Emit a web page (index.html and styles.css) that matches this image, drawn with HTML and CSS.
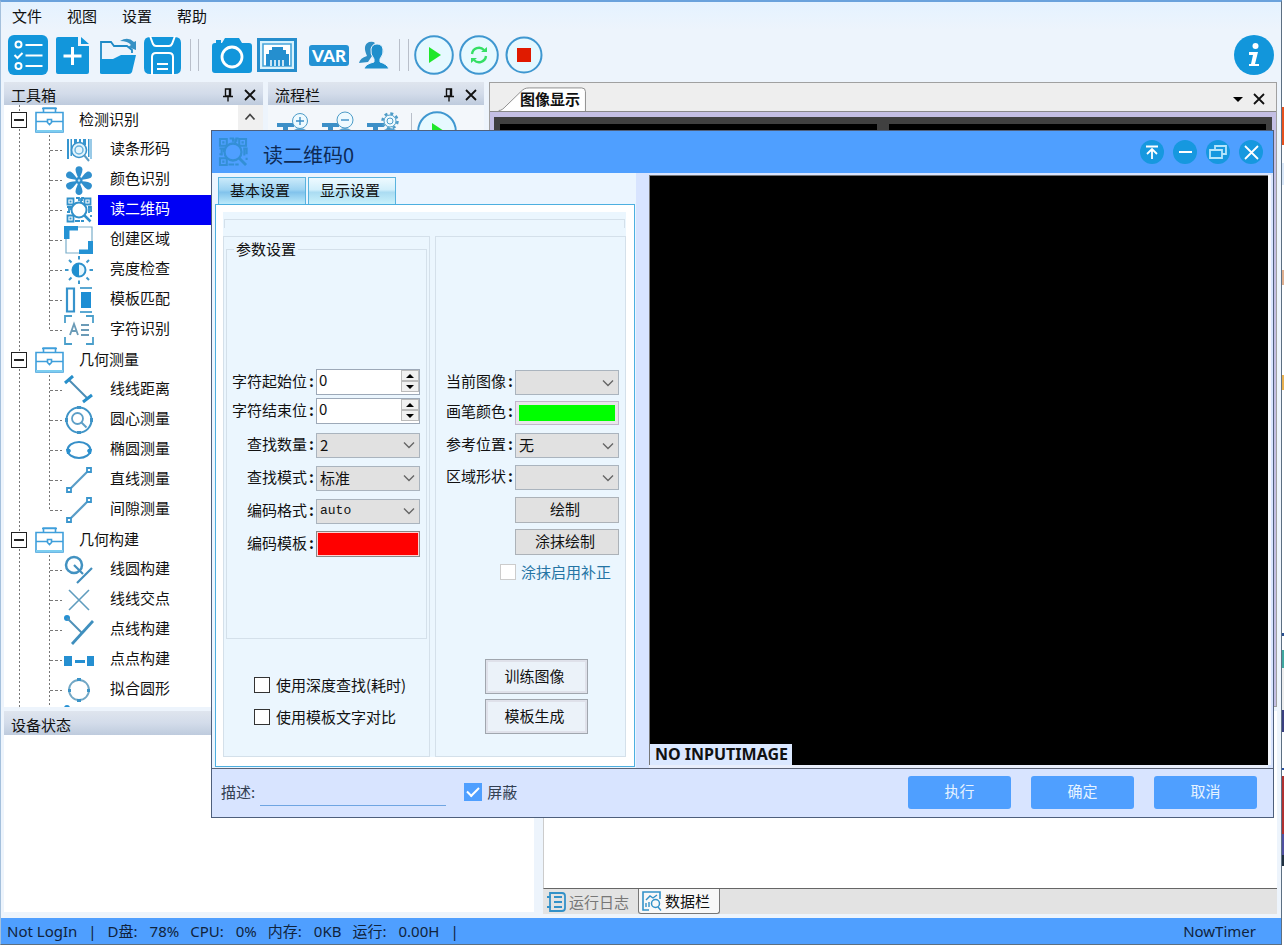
FILE: index.html
```html
<!DOCTYPE html>
<html lang="zh-CN">
<head>
<meta charset="utf-8">
<title>读二维码0</title>
<link rel="stylesheet" href="styles.css">
</head>
<body>
<svg class="sprite" aria-hidden="true">
  <symbol id="case" viewBox="0 0 30 30"><g fill="none" stroke="#3f9fdb" stroke-width="1.6"><path d="M1 7.500h27v19.500h-27zM1 16.500h11M17 16.500h11M8.500 7v-4h12v4M7 3.500h15" /><path d="M12.500 14.500h4v3l-2 2l-2-2z"/></g><path d="M1 25h27v2h-27z" fill="#7ccdf0"/></symbol>
  <symbol id="barcode" viewBox="0 0 30 30"><path d="M3 4h2v20h-2zM6.500 4h1.500v17h-1.500zM10 4h3v5h-3zM15 4h2v4h-2zM19 4h3v6h-3zM24 4h1.500v18h-1.500zM26.500 4h1v20h-1z" fill="#3595cf"/><circle cx="15" cy="15" r="7.500" fill="#e4f5fd" stroke="#3b94cb" stroke-width="1.600"/><circle cx="15" cy="15" r="4" fill="none" stroke="#69b3dd" stroke-width="1.500"/><path d="M20 20l5 6" stroke="#5b9cc4" stroke-width="2"/></symbol>
  <symbol id="flower" viewBox="0 0 30 30"><g fill="#2f8fcd"><path id="petal" d="M15 15.500c-1-4-3.500-8-3.500-11c0-4.500 7-4.500 7 0c0 3-2.500 7-3.500 11z"/><use href="#petal" transform="rotate(60 15 15.500)"/><use href="#petal" transform="rotate(120 15 15.500)"/><use href="#petal" transform="rotate(180 15 15.500)"/><use href="#petal" transform="rotate(240 15 15.500)"/><use href="#petal" transform="rotate(300 15 15.500)"/><circle cx="15" cy="15.500" r="3.500"/></g><circle cx="15" cy="15.500" r="1.200" fill="#bfe3f6"/></symbol>
  <symbol id="qr" viewBox="0 0 30 30"><g fill="none" stroke="currentColor" stroke-width="1.800"><path d="M3.500 3.500h6v6h-6zM20.500 3.500h6v6h-6zM3.500 20.500h6v6h-6z"/><path d="M12 3h3v3M17 3v4M3 12h4v3M24 12h3v5M11 26h5M3 17h3M17 26h3M27 20v2M20 3h-2v3M5 12v6M25 12v6"/><circle cx="15" cy="15" r="7.500" stroke-width="2"/><path d="M20.500 20.500l6 6" stroke-width="2.500"/></g><path d="M5.500 5.500h2v2h-2zM22.500 5.500h2v2h-2zM5.500 22.500h2v2h-2z" fill="currentColor"/></symbol>
  <symbol id="region" viewBox="0 0 30 30"><path d="M2 2h26v26h-26z" fill="none" stroke="#7aaeca" stroke-width="1.200"/><path d="M0 1h14v4.500h-8.500v8.500h-5.500zM29 29h-14v-4.500h9v-8.500h5z" fill="#2492d4"/></symbol>
  <symbol id="sun" viewBox="0 0 30 30"><circle cx="15" cy="15" r="6.500" fill="#e6f7fd" stroke="#2d91cc" stroke-width="2"/><path d="M15 8.500a6.500 6.500 0 0 0 0 13z" fill="#1f8fd0"/><path d="M15 1v3.500M15 25.500v3.500M1 15h3.500M25.500 15h3.500M5 5l2.500 2.500M22.500 22.500l2.500 2.500M5 25l2.500-2.500M22.500 7.500l2.500-2.500" stroke="#3c98cc" stroke-width="2"/></symbol>
  <symbol id="match" viewBox="0 0 30 30"><path d="M3 3.500h7v23h-7z" fill="none" stroke="#3693cc" stroke-width="2.200"/><path d="M16 3h12M16 27h12" stroke="#5ba8d2" stroke-width="2"/><path d="M17 7h10v16h-10z" fill="#1d8ed4"/></symbol>
  <symbol id="ocr" viewBox="0 0 30 30"><path d="M1 8v-7h7M22 1h7v7M29 22v7h-7M8 29h-7v-7" fill="none" stroke="#4b9fcb" stroke-width="1.800"/><path d="M6 20l4-11l4 11M7.500 16h5M17 10h8M17 15h8M17 20h8" fill="none" stroke="#6b9bb7" stroke-width="1.800"/></symbol>
  <symbol id="distance" viewBox="0 0 30 30"><path d="M5 5l18 18" stroke="#4b8db5" stroke-width="2"/><path d="M1 8l8-7M19 27l9-7" stroke="#288fca" stroke-width="3"/></symbol>
  <symbol id="center" viewBox="0 0 30 30"><circle cx="15" cy="15" r="12.500" fill="none" stroke="#3f94c7" stroke-width="2"/><circle cx="13.500" cy="13.500" r="5.500" fill="none" stroke="#5d9fc7" stroke-width="1.800"/><path d="M17.500 17.500l5 5" stroke="#5d9fc7" stroke-width="2"/><path d="M13 1h4v3h-4zM13 26h4v3h-4zM1 13h3v4h-3zM26 13h3v4h-3z" fill="#3f94c7"/></symbol>
  <symbol id="ellipse" viewBox="0 0 30 30"><ellipse cx="15" cy="15" rx="11.500" ry="8" fill="none" stroke="#368fc8" stroke-width="2"/><path d="M2 14h4l1 2l-2 3h-2zM24 14h4l-1 5h-2l-2-3z" fill="#2990cf"/></symbol>
  <symbol id="line" viewBox="0 0 30 30"><path d="M7 23l16-16" stroke="#5a9dc7" stroke-width="2.200"/><path d="M3 23h4v4h-4zM23 3h4v4h-4z" fill="#fff" stroke="#3a95cd" stroke-width="1.800"/></symbol>
  <symbol id="circleline" viewBox="0 0 30 30"><circle cx="10" cy="10" r="8" fill="none" stroke="#4392c1" stroke-width="2.500"/><path d="M10 10l9 9M13 28l15-15" fill="none" stroke="#438fbd" stroke-width="2.200"/></symbol>
  <symbol id="cross" viewBox="0 0 30 30"><path d="M5 5l20 20M25 5l-20 20" stroke="#5f9cbe" stroke-width="1.600"/></symbol>
  <symbol id="pointline" viewBox="0 0 30 30"><circle cx="3" cy="3" r="3" fill="#2590d3"/><path d="M3 3l15 15" stroke="#4e91b8" stroke-width="2"/><path d="M8 29l21-23" stroke="#3f8fbe" stroke-width="2.800"/></symbol>
  <symbol id="points" viewBox="0 0 30 30"><path d="M0 11h8v10h-8zM23 11h7v10h-7zM11 15h10v3h-10z" fill="#258fd1"/></symbol>
  <symbol id="fit" viewBox="0 0 30 30"><circle cx="15" cy="15" r="10" fill="none" stroke="#72a7c5" stroke-width="1.800"/><path d="M13 3h4v3h-4zM13 24h4v3h-4zM4 14h3v3h-3zM23 14h3v3h-3z" fill="#3b94c8"/></symbol>
  <symbol id="pin" viewBox="0 0 14 14"><path d="M4.500 1h5v7h-5zM8.500 1v7M2 8.500h10M7 9v4.500" fill="none" stroke="currentColor" stroke-width="1.400"/></symbol>
  <symbol id="close" viewBox="0 0 14 14"><path d="M2 2l10 10M12 2l-10 10" stroke="currentColor" stroke-width="1.800"/></symbol>
  <symbol id="chevron" viewBox="0 0 12 12"><path d="M1 3.500l5 5l5-5" fill="none" stroke="currentColor" stroke-width="1.400"/></symbol>
  <symbol id="run" viewBox="0 0 40 40"><circle cx="20" cy="20" r="18.800" fill="#e6f9ff" stroke="#3f97d0" stroke-width="2"/><path d="M15 12l12 8l-12 8z" fill="#1fe72b"/></symbol>
  <symbol id="tool" viewBox="0 0 36 40"><path d="M1 18h17v4h-6v10h-5v-10h-6z" fill="#3c8fc7"/><path d="M18 25q6-4 12 0v6h-12z" fill="#5aa5d2"/></symbol>
</svg>

<div class="desktop">
<main class="app">
  <nav class="menu">
    <button>文件</button><button>视图</button><button>设置</button><button>帮助</button>
  </nav>
  <div class="toolbar">
    <button class="tool" aria-label="任务列表"><svg viewBox="0 0 40 40"><rect width="40" height="40" rx="6" fill="#1296db"/><g fill="none" stroke="#fff" stroke-width="2"><circle cx="10.500" cy="9.500" r="3"/><circle cx="10.500" cy="31" r="3"/><path d="M17.500 10h17M17.500 20.500h17M17.500 31h17M6.500 20l3 3l5-5"/></g></svg></button>
    <button class="tool" aria-label="新建"><svg viewBox="0 0 40 40"><path d="M3 4q0-2 2-2h20v9h11v26q0 2-2 2h-29q-2 0-2-2zM28 2l8 7h-8z" fill="#1296db"/><path d="M19.500 12v18M10.500 21h18" stroke="#fff" stroke-width="3"/></svg></button>
    <button class="tool" aria-label="打开"><svg viewBox="0 0 40 40"><path d="M3 36v-29h10l3 4h13l5 4v3" fill="none" stroke="#1f8ac6" stroke-width="1.800"/><path d="M2 38v-14h13l8-4h15l-4 17q-1 2-3 2h-27q-2 0-2-1z" fill="#1296db"/><path d="M22 6q8-5 14 1l2-1v9l-8-3l3-2q-3-4-11-4z" fill="#3590c4"/></svg></button>
    <button class="tool" aria-label="保存"><svg viewBox="0 0 40 40"><path d="M7 2h25q6 0 6 6v25q0 6-6 6h-25q-6 0-6-6v-25q0-6 6-6z" fill="#1296db"/><g fill="none" stroke="#fff" stroke-width="2"><path d="M7 1l3 8q1 2 3 2h13q2 0 3-2l3-8M9 40v-18q0-4 4-4h13q4 0 4 4v18M14 29h11M14 34h11"/></g></svg></button>
    <span class="separator wide"></span>
    <button class="tool" aria-label="相机"><svg viewBox="0 0 40 40"><path d="M3 8h7l3-5h14l3 5h7q3 0 3 3v24q0 3-3 3h-34q-3 0-3-3v-24q0-3 3-3z" fill="#1296db"/><circle cx="20" cy="22" r="10" fill="none" stroke="#fff" stroke-width="2.800"/><path d="M4 5h5v3h-5z" fill="#1296db"/></svg></button>
    <button class="tool" aria-label="采集卡"><svg viewBox="0 0 40 40"><path d="M1.500 4.500h37v31h-37z" fill="#d8f2fd" stroke="#268dcc" stroke-width="3"/><path d="M6 9h28v22h-28z" fill="#fff" stroke="#47a5da" stroke-width="1.600"/><path d="M9 31v-12h3v-4h3v-3h11v3h3v4h3v12z" fill="#258fcf"/><path d="M14 31v-6M18 31v-6M22 31v-6M26 31v-6" stroke="#fff" stroke-width="1.500"/></svg></button>
    <button class="tool var"><span>VAR</span></button>
    <button class="tool" aria-label="用户"><svg viewBox="0 0 40 40"><path d="M5 28q1-5 8-7q-5-11 2-14q4-1 6 1q-6 5-3 13l-4 6z" fill="#2f8fc5"/><path d="M10 34q1-5 10-7v-3q-4-5-3-10q1-5 6-5t6 5q1 5-3 10v3q7 2 9 7z" fill="#1f8fcc" stroke="#edf4fc" stroke-width="1"/></svg></button>
    <span class="separator"></span>
    <button class="tool" aria-label="运行"><svg><use href="#run"/></svg></button>
    <button class="tool" aria-label="循环运行"><svg viewBox="0 0 40 40"><circle cx="20" cy="20" r="18.800" fill="#e6f9ff" stroke="#3f97d0" stroke-width="2"/><path d="M13 19a7 7 0 0 1 12-4M27 21a7 7 0 0 1-12 4" fill="none" stroke="#35df65" stroke-width="2.400"/><path d="M22 17h6v-5zM18 23h-6v5z" fill="#35df65"/></svg></button>
    <button class="tool" aria-label="停止"><svg viewBox="0 0 40 40"><circle cx="20" cy="20" r="17.500" fill="#e6f9ff" stroke="#3f97d0" stroke-width="2"/><path d="M13 13h14v14h-14z" fill="#e01b00"/></svg></button>
    <button class="tool info" aria-label="关于"><svg viewBox="0 0 40 40"><circle cx="20" cy="20" r="20" fill="#1296db"/><circle cx="21.500" cy="11" r="3" fill="#fff"/><path d="M15 17h9l-3 12h4v2h-10v-2h2l2-9h-4z" fill="#fff"/></svg></button>
  </div>

  <div class="workspace">
    <section class="panel toolbox">
      <header class="panel-head"><h2>工具箱</h2><svg><use href="#pin"/></svg><svg><use href="#close"/></svg></header>
      <div class="toolbox-body">
        <ul class="tree">
          <li>
            <div class="root"><span class="toggle"></span><svg><use href="#case"/></svg><span>检测识别</span></div>
            <ul class="branch">
              <li><svg><use href="#barcode"/></svg><span>读条形码</span></li>
              <li><svg><use href="#flower"/></svg><span>颜色识别</span></li>
              <li class="selected"><svg><use href="#qr"/></svg><span>读二维码</span></li>
              <li><svg><use href="#region"/></svg><span>创建区域</span></li>
              <li><svg><use href="#sun"/></svg><span>亮度检查</span></li>
              <li><svg><use href="#match"/></svg><span>模板匹配</span></li>
              <li><svg><use href="#ocr"/></svg><span>字符识别</span></li>
            </ul>
          </li>
          <li>
            <div class="root"><span class="toggle"></span><svg><use href="#case"/></svg><span>几何测量</span></div>
            <ul class="branch">
              <li><svg><use href="#distance"/></svg><span>线线距离</span></li>
              <li><svg><use href="#center"/></svg><span>圆心测量</span></li>
              <li><svg><use href="#ellipse"/></svg><span>椭圆测量</span></li>
              <li><svg><use href="#line"/></svg><span>直线测量</span></li>
              <li><svg><use href="#line"/></svg><span>间隙测量</span></li>
            </ul>
          </li>
          <li>
            <div class="root"><span class="toggle"></span><svg><use href="#case"/></svg><span>几何构建</span></div>
            <ul class="branch">
              <li><svg><use href="#circleline"/></svg><span>线圆构建</span></li>
              <li><svg><use href="#cross"/></svg><span>线线交点</span></li>
              <li><svg><use href="#pointline"/></svg><span>点线构建</span></li>
              <li><svg><use href="#points"/></svg><span>点点构建</span></li>
              <li><svg><use href="#fit"/></svg><span>拟合圆形</span></li>
              <li><svg><use href="#pointline"/></svg></li>
            </ul>
          </li>
        </ul>
        <div class="scrollbar"><svg viewBox="0 0 12 12"><path d="M1.500 8.500l4.500-5l4.500 5" fill="none" stroke="#444" stroke-width="1.800"/></svg></div>
      </div>
    </section>

    <section class="panel flow">
      <header class="panel-head"><h2>流程栏</h2><svg><use href="#pin"/></svg><svg><use href="#close"/></svg></header>
      <div class="flow-tools">
        <svg viewBox="0 0 36 40"><use href="#tool"/><circle cx="24" cy="16" r="7.500" fill="#eefaff" stroke="#4d9cc8"/><path d="M24 12v8M20 16h8" stroke="#3c8fc7" stroke-width="1.400"/></svg>
        <svg viewBox="0 0 36 40"><use href="#tool"/><circle cx="24" cy="15" r="8" fill="#eefaff" stroke="#4d9cc8"/><path d="M20 15h8" stroke="#3c8fc7" stroke-width="1.400"/></svg>
        <svg viewBox="0 0 36 40"><use href="#tool"/><circle cx="24" cy="16" r="7.500" fill="none" stroke="#4d9cc8" stroke-width="2.500" stroke-dasharray="3 2.900"/><circle cx="24" cy="16" r="6" fill="#eefaff" stroke="#4d9cc8"/><circle cx="24" cy="16" r="3" fill="none" stroke="#4d9cc8"/></svg>
        <span class="flow-line"></span>
        <svg class="flow-run"><use href="#run"/></svg>
      </div>
    </section>

    <section class="document">
      <header class="doc-head">
        <div class="doc-tab"><svg viewBox="0 0 96 26"><path d="M0 26c3 0 5-2 8-5l16-16c3-3 5-4 9-4h57q4 0 4 4v21z" fill="#fff"/><path d="M0 25.500c3 0 5-2 8-5l16-15.500c3-3 5-4 9-4h57q4 0 4 4v21" fill="none" stroke="#888"/></svg><span>图像显示</span></div>
        <svg class="doc-arrow" viewBox="0 0 14 14"><path d="M2 5h10l-5 5z"/></svg>
        <svg class="doc-close"><use href="#close"/></svg>
      </header>
      <div class="views"><div class="view"></div><div class="view"></div></div>
    </section>
  </div>

  <div class="lower">
    <section class="panel devices">
      <header class="panel-head"><h2>设备状态</h2></header>
      <div class="device-list"></div>
    </section>
    <section class="data">
      <div class="data-body"></div>
      <div class="data-tabs">
        <button class="data-tab"><svg viewBox="0 0 20 20"><path d="M4 1h12q3 0 3 3v12q0 3-3 3h-12zM8 5h8M8 10h8M8 15h8M1 5h4M4 1v18M1 15h4" fill="none" stroke="#3391c8" stroke-width="1.800"/></svg>运行日志</button>
        <button class="data-tab active"><svg viewBox="0 0 20 20"><path d="M18 8v-7h-17v18h6" fill="none" stroke="#3391c8" stroke-width="1.600"/><circle cx="13.500" cy="12.500" r="4" fill="none" stroke="#3391c8" stroke-width="1.500"/><path d="M16 16l3 3.500M4 9l4-4l3 2l4-3M4 12v4M7 11v5" fill="none" stroke="#3391c8" stroke-width="1.400"/></svg>数据栏</button>
      </div>
    </section>
  </div>

  <footer class="status">
    <span>Not LogIn</span><span>|</span>
    <span class="stat"><span>D盘:</span><span>78%</span></span>
    <span class="stat"><span>CPU:</span><span>0%</span></span>
    <span class="stat"><span>内存:</span><span>0KB</span></span>
    <span class="stat"><span>运行:</span><span>0.00H</span></span>
    <span>|</span>
    <span class="timer">NowTimer</span>
  </footer>

  <section class="dialog" role="dialog" aria-labelledby="dialog-title">
    <header class="title">
      <svg class="title-icon"><use href="#qr"/></svg>
      <h1 id="dialog-title">读二维码0</h1>
      <button aria-label="置顶"><svg viewBox="0 0 24 24"><path d="M6 6.500h12M12 19v-10M7 14l5-5l5 5"/></svg></button>
      <button aria-label="最小化"><svg viewBox="0 0 24 24"><path d="M6 12h13"/></svg></button>
      <button aria-label="还原"><svg viewBox="0 0 24 24"><path d="M4 10h12v8h-12zM9 10v-4h11v8h-4" stroke="#b5e5fb"/></svg></button>
      <button aria-label="关闭"><svg viewBox="0 0 24 24"><path d="M6 6l13 13M19 6l-13 13"/></svg></button>
    </header>

    <div class="dialog-body">
      <div class="settings">
        <div class="tabs" role="tablist">
          <button class="tab current" role="tab" aria-selected="true">基本设置</button>
          <button class="tab" role="tab" aria-selected="false">显示设置</button>
        </div>
        <div class="page" role="tabpanel">
          <div class="page-inner">
            <div class="strip"></div>
            <div class="columns">
              <div class="box left">
                <fieldset class="params">
                  <legend>参数设置</legend>
                  <div class="rows spins">
                    <label for="start">字符起始位</label>
                    <div class="spin"><input id="start" type="number" value="0"><div><button aria-label="增加"><svg viewBox="0 0 8 4"><path d="M0 4l4-4l4 4z"/></svg></button><button aria-label="减少"><svg viewBox="0 0 8 4"><path d="M0 0l4 4l4-4z"/></svg></button></div></div>
                    <label for="end">字符结束位</label>
                    <div class="spin"><input id="end" type="number" value="0"><div><button aria-label="增加"><svg viewBox="0 0 8 4"><path d="M0 4l4-4l4 4z"/></svg></button><button aria-label="减少"><svg viewBox="0 0 8 4"><path d="M0 0l4 4l4-4z"/></svg></button></div></div>
                  </div>
                  <div class="rows">
                    <label for="count">查找数量</label>
                    <div class="pick"><select id="count"><option>2</option></select><svg><use href="#chevron"/></svg></div>
                    <label for="mode">查找模式</label>
                    <div class="pick"><select id="mode"><option>标准</option></select><svg><use href="#chevron"/></svg></div>
                    <label for="format">编码格式</label>
                    <div class="pick mono"><select id="format"><option>auto</option></select><svg><use href="#chevron"/></svg></div>
                    <label for="template">编码模板</label>
                    <button id="template" class="swatch red"></button>
                  </div>
                </fieldset>
                <div class="checks">
                  <label><input type="checkbox">使用深度查找(耗时)</label>
                  <label><input type="checkbox">使用模板文字对比</label>
                </div>
              </div>
              <div class="box right">
                <div class="rows image-rows">
                  <label for="image">当前图像</label>
                  <div class="pick"><select id="image"><option></option></select><svg><use href="#chevron"/></svg></div>
                  <label for="pen">画笔颜色</label>
                  <button id="pen" class="swatch green"></button>
                </div>
                <div class="rows">
                  <label for="position">参考位置</label>
                  <div class="pick"><select id="position"><option>无</option></select><svg><use href="#chevron"/></svg></div>
                  <label for="shape">区域形状</label>
                  <div class="pick"><select id="shape"><option></option></select><svg><use href="#chevron"/></svg></div>
                  <button class="flat">绘制</button>
                  <button class="flat">涂抹绘制</button>
                  <label class="smear"><input type="checkbox">涂抹启用补正</label>
                </div>
                <div class="train">
                  <button>训练图像</button>
                  <button>模板生成</button>
                </div>
              </div>
            </div>
          </div>
        </div>
      </div>
      <div class="preview"><span>NO INPUTIMAGE</span></div>
    </div>

    <footer class="actions">
      <label for="note">描述:</label>
      <input id="note" class="note" type="text">
      <label class="mask"><input type="checkbox" checked>屏蔽</label>
      <div class="action-buttons"><button>执行</button><button>确定</button><button>取消</button></div>
    </footer>
  </section>
</main>
<div class="behind"></div>
</div>
</body>
</html>
```
FILE: styles.css
```css
* { box-sizing: border-box; }

body {
  margin: 0;
  background: #fff;
  color: #111;
  font: 15px/20px "Noto Sans", "Noto Sans CJK SC", sans-serif;
}

button, input, select { font: inherit; color: inherit; margin: 0; padding: 0; border-radius: 0; }
button { border: 0; background: none; }
h1, h2 { margin: 0; font-weight: normal; }
ul { list-style: none; margin: 0; padding: 0; }
svg { display: block; flex: none; }
.sprite { position: absolute; width: 0; height: 0; }

.desktop {
  display: grid;
  grid-template-columns: minmax(0, 1fr) 2px;
  grid-template-rows: minmax(0, 1fr);
  height: 100vh;
  padding-bottom: 3px;
  overflow: hidden;
}
.behind {
  background: linear-gradient(#fff 107px, #e8501c 107px 145px, #fff 145px 163px, #dbe8f8 163px 185px,
    #fff 185px 270px, #e0b090 270px 285px, #fff 285px 375px, #e8b050 375px 390px, #fff 390px 633px,
    #2a5090 633px 636px, #fff 636px 650px, #40a8a0 650px 668px, #eee 668px 710px, #3a4080 710px 732px,
    #fff 732px 768px, #2a50a0 768px 770px, #fff 770px 776px, #b03030 776px 834px, #5050a0 834px 855px,
    #203040 855px 866px, #fff 866px);
}

.app {
  position: relative;
  display: flex;
  flex-direction: column;
  min-width: 0;
  border: 1px solid #5c6f82;
  border-top: 2px solid #6aa2dc;
  border-left-color: #a4c0dc;
  background: #edf4fc;
}

.menu { display: flex; gap: 25px; padding: 3px 11px; background: linear-gradient(#e4f2ff, #edf4fc); }
.menu button { line-height: 22px; }

.toolbar { display: flex; align-items: center; gap: 5px; height: 52px; padding: 0 7px 2px; }
.tool { width: 40px; height: 40px; }
.tool svg { width: 40px; height: 40px; }
.tool.var { margin-left: 7px; }
.var span { display: block; border-radius: 3px; background: #2492d4; color: #fff; font: 900 17px/21px Lato, sans-serif; }
.info { margin-left: auto; }
.separator { width: 10px; height: 32px; border: solid #b9bfca; border-width: 0 1px; }
.separator.wide { width: 9px; margin: 0 8px 0 2px; }

.panel { display: flex; flex-direction: column; }
.panel-head {
  display: flex;
  align-items: center;
  gap: 8px;
  height: 23px;
  flex: none;
  padding: 2px 6px 0 7px;
  background: linear-gradient(#dfe5ee, #d3dcea 50%, #becbdd);
}
.panel-head h2 { margin-right: auto; font-size: 15px; line-height: 20px; }
.panel-head svg { width: 14px; height: 14px; }

.workspace { display: flex; flex: 1; gap: 5px; min-height: 0; padding: 0 4px 4px 3px; }
.toolbox { width: 259px; }
.toolbox-body { display: flex; flex: 1; min-height: 0; background: #fff; }
.tree {
  flex: 1;
  overflow: hidden;
  background: repeating-linear-gradient(#777 0 2px, #fff 2px 4px) 15px 0 / 1px 100% no-repeat;
}
.root { display: flex; align-items: center; height: 30px; padding-left: 7px; }
.root > span:last-child { padding-bottom: 2px; }
.toggle {
  width: 16px;
  height: 16px;
  border: 1px solid #222;
  background: linear-gradient(#222, #222) center / 10px 2px no-repeat #fff;
}
.root svg { width: 30px; height: 30px; margin: 0 14px 0 8px; }
.branch { background: repeating-linear-gradient(#777 0 2px, #fff 2px 4px) 45px 0 / 1px calc(100% - 15px) no-repeat; }
.branch li {
  display: flex;
  height: 30px;
  padding-left: 60px;
  background: repeating-linear-gradient(90deg, #777 0 3px, #fff 3px 5px) 46px 15px / 12px 1px no-repeat;
}
.branch svg { width: 30px; height: 30px; margin-right: 4px; color: #3191ca; }
.branch span { flex: 1; padding-left: 12px; line-height: 27px; }
.selected span { background: #0000f5; color: #fff; }
.scrollbar { width: 25px; padding: 6px; background: #f0f0f0; }
.scrollbar svg { width: 12px; height: 12px; }

.flow { width: 216px; background: #f3f7fb; }
.flow-tools { display: flex; gap: 9px; padding-left: 8px; }
.flow-tools svg { width: 36px; height: 40px; }
.flow-line { width: 1px; height: 40px; margin-top: 8px; background: #b9bfca; }
.flow-tools .flow-run { width: 40px; margin: 6px 0 0 -4px; }

.document { display: flex; flex: 1; flex-direction: column; min-width: 0; border: 1px solid #a0a0a0; background: #c4bfe4; }
.doc-head { display: flex; align-items: center; gap: 7px; height: 29px; flex: none; padding: 4px 10px 0 5px; border-bottom: 1px solid #888; background: #eee; }
.doc-tab { display: grid; align-self: flex-end; margin-right: auto; }
.doc-tab > * { grid-area: 1 / 1; }
.doc-tab svg { width: 96px; height: 24px; }
.doc-tab span { padding-left: 25px; font-weight: bold; line-height: 24px; }
.doc-arrow, .doc-close { width: 14px; height: 14px; }
.views { display: grid; flex: 1; grid-template-columns: 1fr 1fr; margin: 5px 4px 4px; background: #404040; }
.view { margin: 7px 6px; background: #000; }

.lower { display: flex; flex: none; gap: 9px; height: 207px; padding: 0 4px 4px 3px; }
.devices { width: 530px; padding-bottom: 2px; }
.lower .panel-head { height: 24px; padding-top: 3px; }
.device-list { flex: 1; background: #fff; }
.data { display: flex; flex: 1; flex-direction: column; }
.data-body { flex: 1; background: #fff; border-left: 1px solid #ccc; border-bottom: 1px solid #666; }
.data-tabs { display: flex; height: 25px; background: #e3e3e3; }
.data-tab { display: flex; align-items: center; gap: 3px; padding: 0 9px 0 3px; color: #777; }
.data-tab svg { width: 20px; height: 20px; }
.data-tab.active { border: 1px solid #777; border-top: 0; border-radius: 0 0 3px 3px; background: #f8f8f8; color: #111; }

.status { display: flex; flex: none; align-items: center; gap: 11px; height: 26px; padding: 0 25px 0 6px; background: #4f9fff; color: #10233c; white-space: nowrap; }
.stat { display: flex; gap: 12px; }
.timer { margin-left: auto; }

.dialog {
  position: absolute;
  inset: 128px 7px 126px 210px;
  display: flex;
  flex-direction: column;
  border: 1px solid #4e5f7c;
  background: #d8e4ff;
  font-family: "Noto Sans CJK SC", sans-serif;
}
.title { display: flex; align-items: center; gap: 9px; height: 42px; flex: none; padding: 0 10px 0 4px; background: #4f9fff; }
.title-icon { width: 34px; height: 34px; color: #338fd6; }
.title h1 { margin: 5px auto 0 4px; font-size: 20px; line-height: 30px; color: #0d2a55; }
.title button svg { width: 24px; height: 24px; border-radius: 50%; background: #1698df; fill: none; stroke: #fff; stroke-width: 1.8; }

.dialog-body { display: flex; flex: 1; min-height: 0; border-bottom: 1px solid #5b6377; }
.settings { display: flex; flex-direction: column; width: 424px; padding: 4px 1px 1px 3px; background: #ebf5ff; }
.tabs { display: flex; gap: 2px; padding-left: 3px; }
.tab { width: 88px; height: 27px; padding: 0 4px 2px 0; border: 1px solid #59b3de; border-bottom: 0; background: linear-gradient(#eefaff, #d2effb 45%, #abdcf2 55%, #c9f1fb); }
.tab.current { background: linear-gradient(#cbeafa, #9dd3f2 45%, #82c3ec 55%, #bceafa); }
.page { display: flex; flex: 1; padding: 7px 8px 9px 7px; border: 1px solid #4dafe0; background: #fff; }
.page-inner { display: flex; flex: 1; flex-direction: column; padding-top: 7px; background: #ebf6fe; }
.strip { height: 9px; margin: 0 1px; border: 1px solid #d4e0ea; border-bottom: 0; }
.columns { display: flex; flex: 1; gap: 5px; padding: 8px 0 0; }
.box { display: flex; flex-direction: column; border: 1px solid #d4e0ea; }
.left { width: 207px; }
.right { flex: 1; padding: 133px 6px 22px 0; }
.params { flex: 1; min-width: 0; margin: 0 2px; padding: 108px 6px 0 0; border: 1px solid #d4e0ea; }
.params legend { margin-left: 7px; padding: 0 2px; line-height: 24px; }
.rows { display: grid; grid-template-columns: 1fr 104px; grid-auto-rows: 26px; align-items: center; gap: 7px 2px; }
.rows > label { padding-bottom: 3px; text-align: right; white-space: nowrap; line-height: 22px; }
.rows > label:not(.smear)::after { content: ":"; font-weight: bold; padding-left: 2px; }
.rows.spins { row-gap: 3px; margin-bottom: 8px; }
.right .rows { grid-auto-rows: 25px; }
.right .image-rows { row-gap: 5px; margin-bottom: 8px; }
.spin { display: flex; height: 26px; border: 1px solid #9da9b8; background: #fff; }
.spin input { width: 84px; height: 20px; padding-left: 2px; border: 0; background: none; appearance: textfield; outline: 0; }
.spin input::-webkit-inner-spin-button { appearance: none; }
.spin > div { display: grid; width: 18px; height: 22px; }
.spin button { display: grid; place-items: center; border: 1px solid #bbb; background: #f0f0f0; }
.spin svg { width: 8px; height: 4px; }
.pick { display: grid; height: 25px; }
.pick > * { grid-area: 1 / 1; }
.pick select { width: 100%; padding: 0 0 1px 3px; border: 1px solid #aab4be; background: #e1e1e1; appearance: none; }
.pick svg { width: 12px; height: 12px; margin-right: 5px; place-self: center end; color: #666; pointer-events: none; }
.mono select { padding-bottom: 0; font-family: "Liberation Mono", monospace; font-size: 13px; }
.swatch { height: 26px; border: 1px solid #888; }
.red { background: #f00; box-shadow: inset 0 0 0 1px #ffd0d0; }
.green { height: 24px; border-color: #c2b6cc; background: #0f0; box-shadow: inset 0 0 0 3px #e8e6ea; }
.flat { grid-column: 2; height: 26px; padding: 0 4px 2px 0; border: 1px solid #acb2b8; background: #e1e1e1; }
.rows > .smear { grid-column: 1 / 3; display: flex; align-items: center; justify-content: flex-end; gap: 5px; padding-right: 8px; color: #2474a4; }
input[type="checkbox"] { width: 16px; height: 16px; flex: none; border: 1px solid #333; background: #fff; appearance: none; }
.smear input[type="checkbox"] { border-color: #ccc; }
.checks { height: 117px; padding: 30px 0 0 30px; }
.checks label { display: flex; align-items: center; gap: 6px; height: 32px; }
.train { display: grid; gap: 5px; width: 103px; margin: auto 0 0 49px; }
.train button { height: 35px; padding: 0 4px 2px 0; border: 1px solid #a0a6ae; background: #ebf2f9; box-shadow: inset 0 0 0 2px #dfe1ea; }

.preview { display: flex; flex: 1; align-items: flex-end; margin: 2px 5px 3px 13px; border: solid #777; border-width: 1px 0 0 1px; background: #000; box-shadow: 3px 0 #f4f6fb, 0 3px #e9eefb; }
.preview span { padding: 0 4px 0 5px; background: #dbe8ff; font: bold 16px/21px "Noto Sans", sans-serif; }

.actions { display: flex; align-items: center; height: 48px; flex: none; padding: 0 16px 2px 9px; color: #333f52; }
.note { width: 186px; height: 28px; margin-left: 5px; border: 0; border-bottom: 1px solid #6fa5e2; background: none; outline: 0; }
.mask { display: flex; align-items: center; gap: 5px; margin-left: 18px; }
.mask input[type="checkbox"] { width: 18px; height: 18px; border: 0; background: #4f9fff; display: grid; place-items: center; }
.mask input:checked::before { content: ""; width: 10px; height: 5px; margin-bottom: 4px; border: solid #fff; border-width: 0 0 2px 2px; rotate: -45deg; }
.action-buttons { display: flex; gap: 20px; margin-left: auto; }
.action-buttons button { width: 103px; height: 33px; padding-bottom: 2px; border-radius: 3px; background: #4f9fff; color: #e6f3ff; }
```
